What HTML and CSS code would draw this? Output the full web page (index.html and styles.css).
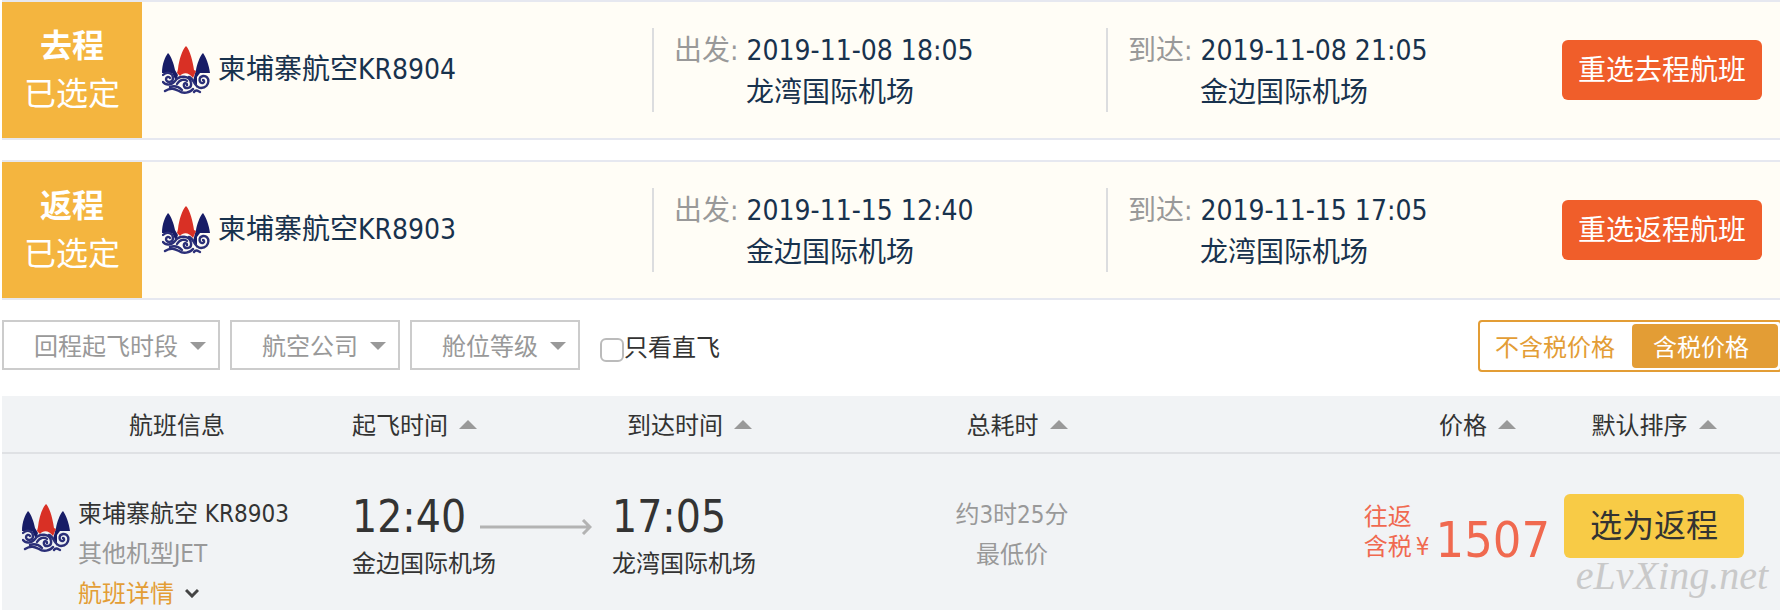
FILE: index.html
```
<!DOCTYPE html>
<html lang="zh-CN">
<head>
    <meta charset="UTF-8">
    <title>航班选择</title>
    <link rel="stylesheet" href="styles.css">
</head>

<body>
<svg class="sprite" aria-hidden="true">
    <symbol id="logo" viewBox="0 0 48 48">
        <path fill="#171c66" d="M6 7C9 10 12 18 13 24L16 29L14 35L10 27L0 27C0 18 3 11 6 7Z"/>
        <path fill="#171c66" d="M41 7C44 11 47 19 48 27L38 27L35 31V42L31 35L34 24C35 18 38 10 41 7Z"/>
        <path fill="#d93025" d="M24 0C28 4 31 16 32 24L34 25L31 32C27 26 21 26 18 30L15 27L16 23C17 14 20 4 24 0Z"/>
        <g fill="none" stroke="#2b2f78" stroke-width="2.4" stroke-linecap="round">
            <path d="M1 29C5 25 11 27 11 32C11 37 4 37 4 33C4 31 7 30 8 32"/>
            <path d="M1 36C4 40 10 39 13 35C17 29 28 29 29 37C30 43 23 43 22 40C21 37 25 36 25 39"/>
            <path d="M15 38C18 33 23 33 25 35"/>
            <path d="M3 45C9 41 13 43 17 45C21 48 28 47 31 43"/>
            <path d="M8 41C14 39 17 41 20 44"/>
            <path d="M27 31C32 32 32 42 39 42C49 41 48 29 41 30C36 31 37 38 41 37C43 36 42 34 41 34"/>
            <path d="M32 46C34 43 36 45 38 46"/>
        </g>
    </symbol>
</svg>

<div class="trip">
    <div class="trip-tag"><b>去程</b><span>已选定</span></div>
    <div class="trip-airline">
        <svg class="logo"><use href="#logo"/></svg>
        <span>柬埔寨航空KR8904</span>
    </div>
    <div class="trip-time">
        <p><span class="gray">出发:</span> 2019-11-08 18:05</p>
        <p class="airport">龙湾国际机场</p>
    </div>
    <div class="trip-time">
        <p><span class="gray">到达:</span> 2019-11-08 21:05</p>
        <p class="airport">金边国际机场</p>
    </div>
    <button class="btn-reset">重选去程航班</button>
</div>

<div class="trip">
    <div class="trip-tag"><b>返程</b><span>已选定</span></div>
    <div class="trip-airline">
        <svg class="logo"><use href="#logo"/></svg>
        <span>柬埔寨航空KR8903</span>
    </div>
    <div class="trip-time">
        <p><span class="gray">出发:</span> 2019-11-15 12:40</p>
        <p class="airport">金边国际机场</p>
    </div>
    <div class="trip-time">
        <p><span class="gray">到达:</span> 2019-11-15 17:05</p>
        <p class="airport">龙湾国际机场</p>
    </div>
    <button class="btn-reset">重选返程航班</button>
</div>

<div class="filters">
    <div class="select wide">
        <select aria-label="回程起飞时段"><option>回程起飞时段</option></select>
    </div>
    <div class="select">
        <select aria-label="航空公司"><option>航空公司</option></select>
    </div>
    <div class="select">
        <select aria-label="舱位等级"><option>舱位等级</option></select>
    </div>
    <div class="direct">
        <input type="checkbox" id="direct"><label for="direct">只看直飞</label>
    </div>
    <div class="tax">
        <button>不含税价格</button>
        <button class="active">含税价格</button>
    </div>
</div>

<table class="flights">
    <colgroup>
        <col class="col-info">
        <col class="col-dep">
        <col class="col-arr">
        <col class="col-total">
        <col class="col-price">
        <col class="col-action">
    </colgroup>
    <thead>
        <tr>
            <th class="info">航班信息</th>
            <th><button class="sort">起飞时间</button></th>
            <th class="arr"><button class="sort">到达时间</button></th>
            <th class="total"><button class="sort">总耗时</button></th>
            <th class="price"><button class="sort">价格</button></th>
            <th class="action"><button class="sort">默认排序</button></th>
        </tr>
    </thead>
    <tbody>
        <tr>
            <td>
                <div class="flight">
                    <svg class="logo"><use href="#logo"/></svg>
                    <div>
                        <p>柬埔寨航空 KR8903</p>
                        <p class="gray">其他机型JET</p>
                        <a href="#detail">航班详情
                            <svg class="chevron" viewBox="0 0 14 10"><path d="M1 2L7 8L13 2"/></svg>
                        </a>
                    </div>
                </div>
            </td>
            <td>
                <div class="clock">12:40
                    <svg class="arrow" viewBox="0 0 112 16"><path d="M0 8H110M103 1L110 8L103 15"/></svg>
                </div>
                <p class="place">金边国际机场</p>
            </td>
            <td>
                <div class="clock">17:05</div>
                <p class="place">龙湾国际机场</p>
            </td>
            <td class="duration">
                <p>约3时25分</p>
                <p>最低价</p>
            </td>
            <td>
                <div class="fare">
                    <span>往返<br>含税</span>
                    <span class="yen">¥</span>
                    <span class="amount">1507</span>
                </div>
            </td>
            <td class="action">
                <button class="btn-pick">选为返程</button>
            </td>
        </tr>
    </tbody>
</table>
<div class="watermark">eLvXing.net</div>
</body>
</html>
```
FILE: styles.css
```
* {
    box-sizing: border-box;
}
body {
    position: relative;
    margin: 0;
    padding-left: 2px;
    overflow-x: hidden;
    background-color: white;
    color: #333;
    font-family: "DejaVu Sans Condensed", "Noto Sans CJK SC", sans-serif;
    font-size: 24px;
}
p {
    margin: 0;
}
button, select {
    font: inherit;
    color: inherit;
    background: none;
    border: none;
    margin: 0;
    padding: 0;
}
.sprite {
    display: none;
}
.logo {
    width: 48px;
    height: 48px;
    flex: none;
}
.gray {
    color: #999;
}

/* valgte reiser */
.trip {
    display: grid;
    grid-template-columns: 140px 1fr 454px 454px 220px;
    align-items: center;
    height: 140px;
    margin-bottom: 20px;
    border-top: 2px solid #e6e8f0;
    border-bottom: 2px solid #e6e8f0;
    background-color: #fffdf6;
    color: #18324d;
    font-size: 28px;
    line-height: 42px;
}
.trip-tag {
    display: flex;
    flex-direction: column;
    justify-content: center;
    height: 100%;
    background-color: #f4b53f;
    color: white;
    font-size: 32px;
    line-height: 48px;
    text-align: center;
}
.trip-airline {
    display: flex;
    align-items: center;
    gap: 8px;
    padding-left: 20px;
}
.trip-time {
    height: 84px;
    padding: 2px 0 0 20px;
    border-left: 2px solid #dcdddf;
}
.airport {
    padding-left: 72px;
}
.btn-reset {
    width: 200px;
    height: 60px;
    margin-left: 2px;
    padding-top: 2px;
    border-radius: 6px;
    background-color: #f05e2a;
    color: white;
}

.filters {
    display: flex;
    gap: 10px;
    height: 52px;
    margin-bottom: 24px;
}
.select {
    position: relative;
    width: 170px;
    height: 50px;
}
.select.wide {
    width: 218px;
}
.select select {
    appearance: none;
    width: 100%;
    height: 100%;
    padding: 4px 0 0 30px;
    border: 2px solid #ccc;
    color: #999;
}
.select::after {
    content: "";
    position: absolute;
    right: 14px;
    top: 22px;
    border: 8px solid transparent;
    border-top-color: #999;
    border-bottom: none;
    pointer-events: none;
}
.direct {
    display: flex;
    align-items: center;
    margin-left: 10px;
}
.direct input {
    appearance: none;
    width: 24px;
    height: 24px;
    margin: 8px 0 0;
    border: 2px solid #bbb;
    border-radius: 6px;
    background-color: white;
}
.direct label {
    padding-bottom: 2px;
}
.tax {
    display: flex;
    margin-left: auto;
    margin-right: -2px;
    padding: 2px;
    border: 2px solid #e39d35;
    border-radius: 4px;
    color: #e39d35;
}
.tax button {
    padding: 0 17px 2px 13px;
}
.tax .active {
    padding: 0 29px 2px 21px;
    border-radius: 4px;
    background-color: #e39d35;
    color: white;
}

/* flyliste */
.flights {
    width: 100%;
    table-layout: fixed;
    border-spacing: 0;
    background-color: #f1f3f5;
}
.col-info { width: 350px; }
.col-dep { width: 260px; }
.col-arr { width: 280px; }
.col-total { width: 240px; }
.col-action { width: 228px; }

.flights th {
    height: 58px;
    padding: 0 0 2px;
    border-bottom: 2px solid #dfe1e4;
    font-weight: normal;
    text-align: left;
}
.flights td {
    height: 156px;
    padding: 38px 0 0;
    vertical-align: top;
    line-height: 40px;
}
.flights .info {
    padding-left: 127px;
}
.flights .arr {
    padding-left: 15px;
}
.flights .total {
    padding-left: 10px;
    text-align: center;
}
.flights .price {
    padding-right: 36px;
    text-align: right;
}
.flights .action {
    padding-right: 24px;
    text-align: center;
}
.sort::after {
    content: "";
    display: inline-block;
    margin-left: 11px;
    border: 9px solid transparent;
    border-bottom: 9px solid #999;
    border-top: none;
    vertical-align: 5px;
}
.flight {
    display: flex;
    gap: 8px;
    padding: 2px 0 0 20px;
}
.flight .logo {
    margin-top: 10px;
}
.flight a {
    color: #e39d35;
    text-decoration: none;
}
.chevron {
    width: 14px;
    height: 10px;
    margin-left: 4px;
    vertical-align: 4px;
    fill: none;
    stroke: #444;
    stroke-width: 3;
}
.clock {
    display: flex;
    align-items: center;
    gap: 14px;
    height: 50px;
    font-size: 44px;
}
.arrow {
    width: 112px;
    height: 16px;
    margin-top: 20px;
    fill: none;
    stroke: #b3b3b3;
    stroke-width: 3;
}
.place {
    margin-top: 2px;
}
.flights .duration {
    padding-top: 41px;
    color: #999;
    text-align: center;
}
.fare {
    display: flex;
    justify-content: flex-end;
    align-items: flex-end;
    padding: 10px 2px 0 0;
    color: #f0694f;
    line-height: 30px;
}
.yen {
    margin: 0 6px 0 4px;
}
.amount {
    font-size: 50px;
    line-height: 44px;
}
.btn-pick {
    width: 180px;
    height: 64px;
    margin-top: 2px;
    border-radius: 6px;
    background-color: #f8cb46;
    color: #333;
    font-size: 32px;
}
.watermark {
    position: absolute;
    right: 12px;
    bottom: 16px;
    color: #c9c9c9;
    font-family: "Liberation Serif", serif;
    font-style: italic;
    font-size: 40px;
    line-height: 44px;
}
```
